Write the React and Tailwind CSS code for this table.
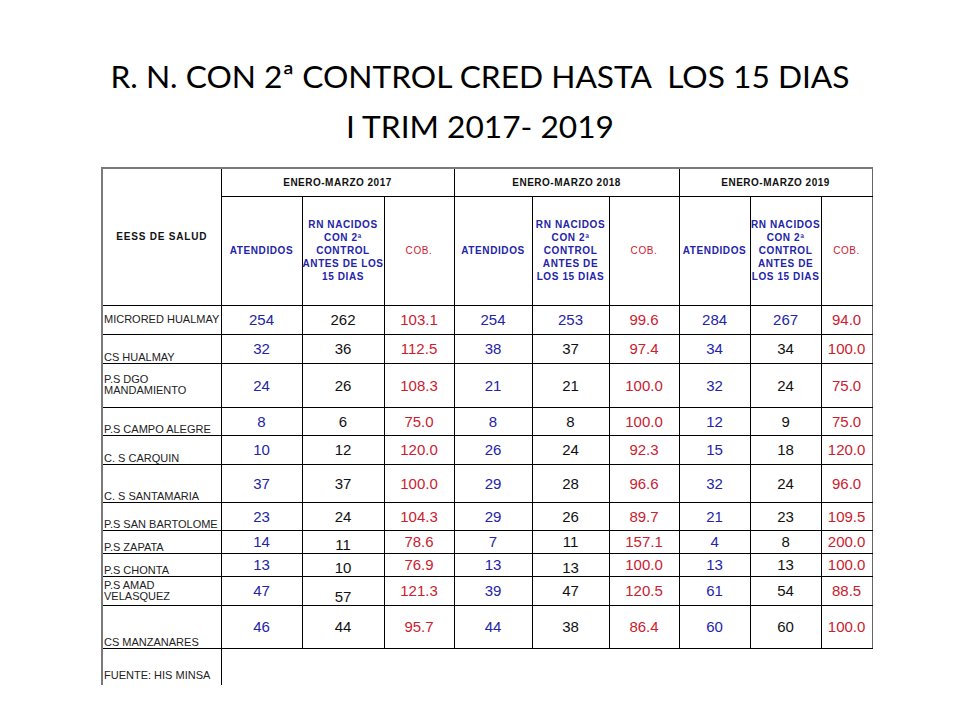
import React from "react";

const BLUE = "text-[#2424a8]";
const RED = "text-[#cc2030]";
const BLACK = "text-[#111]";

const rows = [
  { name: "MICRORED HUALMAY", v: ["254", "262", "103.1", "254", "253", "99.6", "284", "267", "94.0"], h: 29, nameAlign: "middle", blueRN: true },
  { name: "CS HUALMAY", v: ["32", "36", "112.5", "38", "37", "97.4", "34", "34", "100.0"], h: 29 },
  { name: "P.S DGO MANDAMIENTO", v: ["24", "26", "108.3", "21", "21", "100.0", "32", "24", "75.0"], h: 44, nameAlign: "middle" },
  { name: "P.S CAMPO ALEGRE", v: ["8", "6", "75.0", "8", "8", "100.0", "12", "9", "75.0"], h: 28 },
  { name: "C. S CARQUIN", v: ["10", "12", "120.0", "26", "24", "92.3", "15", "18", "120.0"], h: 29 },
  { name: "C. S SANTAMARIA", v: ["37", "37", "100.0", "29", "28", "96.6", "32", "24", "96.0"], h: 38 },
  { name: "P.S SAN BARTOLOME", v: ["23", "24", "104.3", "29", "26", "89.7", "21", "23", "109.5"], h: 28 },
  { name: "P.S ZAPATA", v: ["14", "11", "78.6", "7", "11", "157.1", "4", "8", "200.0"], h: 23, low: [1] },
  { name: "P.S CHONTA", v: ["13", "10", "76.9", "13", "13", "100.0", "13", "13", "100.0"], h: 23, low: [1, 4] },
  { name: "P.S AMAD VELASQUEZ", v: ["47", "57", "121.3", "39", "47", "120.5", "61", "54", "88.5"], h: 29, nameAlign: "middle", low: [1] },
  { name: "CS MANZANARES", v: ["46", "44", "95.7", "44", "38", "86.4", "60", "60", "100.0"], h: 43 },
];

const widths = [119, 81, 82, 70, 78, 77, 70, 71, 71, 51];
const widthCls = [
  "w-[119px]", "w-[81px]", "w-[82px]", "w-[70px]", "w-[78px]",
  "w-[77px]", "w-[70px]", "w-[71px]", "w-[71px]", "w-[51px]",
];
const heightCls = {
  23: "h-[23px]", 28: "h-[28px]", 29: "h-[29px]", 38: "h-[38px]", 43: "h-[43px]", 44: "h-[44px]",
};

function valColor(i, row) {
  const k = i % 3;
  if (k === 0) return BLUE;
  if (k === 2) return RED;
  if (row.blueRN && i > 2) return BLUE;
  return BLACK;
}

const cell = "border border-black";
const sub = "text-[10px] font-bold leading-[13px] tracking-[0.6px]";

function RNHeader({ lines }) {
  return (
    <td className={`${cell} ${BLUE} ${sub} text-center align-middle px-0`}>
      {lines.map((l, i) => (
        <div key={i} className="whitespace-nowrap">{l}</div>
      ))}
    </td>
  );
}

export default function App() {
  return (
    <div className="w-[960px] h-[720px] bg-white overflow-hidden" style={{ fontFamily: '"Liberation Sans", Arial, sans-serif' }}>
      <div
        className="pt-[51px] text-center text-[31.7px] leading-[50px] text-black whitespace-pre"
        style={{ fontFamily: 'Lato, "Open Sans", sans-serif' }}
      >
        <div>R. N. CON 2ª CONTROL CRED HASTA  LOS 15 DIAS</div>
        <div>I TRIM 2017- 2019</div>
      </div>
      <table className="ml-[101px] mt-[16px] table-fixed border-collapse w-[771px]">
        <colgroup>
          {widths.map((w, i) => (
            <col key={i} className={widthCls[i]} />
          ))}
        </colgroup>
        <tbody>
          <tr className="h-[28px]">
            <td rowSpan={2} className={`${cell} border-l-2 border-l-[#7a7a7a] border-t-2 border-t-[#7a7a7a] text-center align-middle text-[10px] font-bold tracking-[0.8px] ${BLACK}`}>
              EESS DE SALUD
            </td>
            {["ENERO-MARZO 2017", "ENERO-MARZO 2018", "ENERO-MARZO 2019"].map((t, i) => (
              <td key={t} colSpan={3} className={`${cell} border-t-2 border-t-[#7a7a7a] ${i === 2 ? "border-r-[#666]" : ""} text-center align-middle text-[10px] font-bold tracking-[0.5px] ${BLACK}`}>
                {t}
              </td>
            ))}
          </tr>
          <tr className="h-[109px]">
            <td className={`${cell} ${BLUE} ${sub} text-center align-middle px-0`}>ATENDIDOS</td>
            <RNHeader lines={["RN NACIDOS", "CON 2ª", "CONTROL", "ANTES DE LOS", "15 DIAS"]} />
            <td className={`${cell} ${RED} text-[10px] text-center align-middle tracking-[0.6px]`}>COB.</td>
            <td className={`${cell} ${BLUE} ${sub} text-center align-middle px-0`}>ATENDIDOS</td>
            <RNHeader lines={["RN NACIDOS", "CON 2ª", "CONTROL", "ANTES DE", "LOS 15 DIAS"]} />
            <td className={`${cell} ${RED} text-[10px] text-center align-middle tracking-[0.6px]`}>COB.</td>
            <td className={`${cell} ${BLUE} ${sub} text-center align-middle whitespace-nowrap px-0`}>ATENDIDOS</td>
            <RNHeader lines={["RN NACIDOS", "CON 2ª", "CONTROL", "ANTES DE", "LOS 15 DIAS"]} />
            <td className={`${cell} border-r-[#666] ${RED} text-[10px] text-center align-middle tracking-[0.6px]`}>COB.</td>
          </tr>
          {rows.map((r) => (
            <tr key={r.name} className={heightCls[r.h]}>
              <td
                className={`${cell} border-l-2 border-l-[#7a7a7a] ${r.nameAlign === "middle" ? "align-middle" : "align-bottom"} text-left pl-[1px] pr-0 py-0 text-[11px] leading-[11px] text-[#222]`}
              >
                {r.name}
              </td>
              {r.v.map((v, i) => (
                <td
                  key={i}
                  className={`${cell} ${i === 8 ? "border-r-[#666]" : ""} ${valColor(i, r)} text-[15px] leading-[17px] text-center ${r.low && r.low.includes(i) ? "align-bottom" : "align-middle"} whitespace-nowrap p-0`}
                >
                  {v}
                </td>
              ))}
            </tr>
          ))}
          <tr className="h-[37px]">
            <td className={`${cell} border-b-0 border-l-2 border-l-[#7a7a7a] align-bottom text-left pl-[1px] pb-[4px] text-[11px] leading-[11px] text-[#222]`}>
              FUENTE: HIS MINSA
            </td>
            {widths.slice(1).map((_, i) => (
              <td key={i} className="border-t border-t-black border-x-0 border-b-0"></td>
            ))}
          </tr>
        </tbody>
      </table>
    </div>
  );
}
